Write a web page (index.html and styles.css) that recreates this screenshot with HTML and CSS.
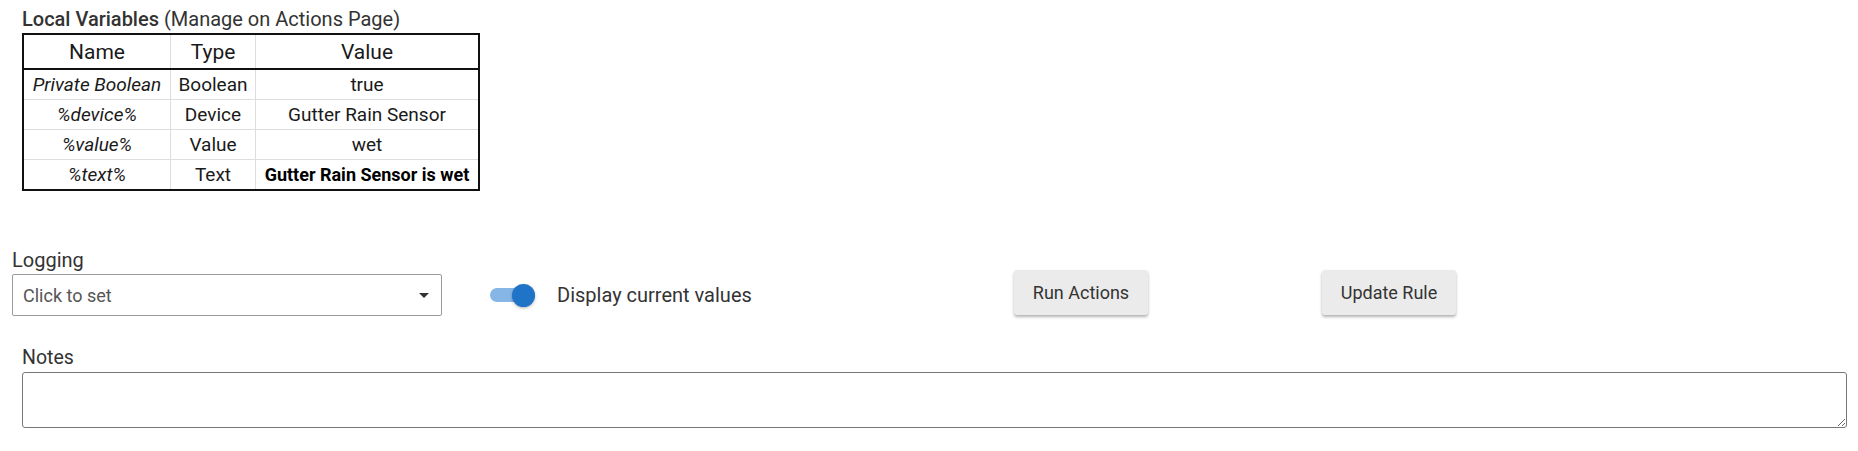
FILE: index.html
```html
<!DOCTYPE html>
<html>
<head>
<meta charset="utf-8">
<link rel="stylesheet" href="styles.css">
</head>
<body>
<section class="vars">
  <div class="vars-title"><b>Local Variables</b> (Manage on Actions Page)</div>
  <table class="vars-table">
    <thead>
      <tr><th class="c-name">Name</th><th class="c-type">Type</th><th class="c-value">Value</th></tr>
    </thead>
    <tbody>
      <tr><td class="n">Private Boolean</td><td>Boolean</td><td>true</td></tr>
      <tr><td class="n">%device%</td><td>Device</td><td>Gutter Rain Sensor</td></tr>
      <tr><td class="n">%value%</td><td>Value</td><td>wet</td></tr>
      <tr><td class="n">%text%</td><td>Text</td><td class="strong">Gutter Rain Sensor is wet</td></tr>
    </tbody>
  </table>
</section>

<section class="logging">
  <div class="field-label">Logging</div>
  <div class="controls">
    <div class="select">
      <span class="select-text">Click to set</span>
      <svg class="select-arrow" width="10" height="5" viewBox="0 0 10 5"><path d="M0 0 L10 0 L5 5 Z" fill="#333"/></svg>
    </div>
    <div class="switch-field">
      <span class="switch"><span class="switch-track"></span><span class="switch-thumb"></span></span>
      <span class="switch-label">Display current values</span>
    </div>
    <button class="btn">Run Actions</button>
    <button class="btn btn-second">Update Rule</button>
  </div>
</section>

<section class="notes">
  <div class="notes-label">Notes</div>
  <textarea class="notes-box"></textarea>
</section>
</body>
</html>
```

FILE: styles.css
```css
html, body {
  margin: 0;
  padding: 0;
  background: #fff;
}
body {
  font-family: Roboto, "Liberation Sans", sans-serif;
  color: #333;
}
.vars {
  padding: 7px 0 0 22px;
}
.vars-title {
  font-size: 20px;
  line-height: 24px;
  height: 26px;
  color: #333;
}
.vars-title b {
  font-weight: 500;
}
.vars-table {
  border-collapse: collapse;
  border: 2px solid #111;
  color: #1a1a1a;
  width: 458px;
}
.vars-table th {
  font-weight: 400;
  font-size: 21px;
  line-height: 24px;
  height: 33px;
  padding: 0;
  border-bottom: 2px solid #111;
  border-left: 1px solid #ddd;
}
.vars-table th:first-child, .vars-table td:first-child {
  border-left: none;
}
.c-name { width: 146px; }
.c-type { width: 84px; }
.vars-table td {
  font-size: 19px;
  line-height: 22px;
  height: 29px;
  padding: 0;
  text-align: center;
  border-top: 1px solid #ddd;
  border-left: 1px solid #ddd;
  white-space: nowrap;
}
.vars-table tbody tr:first-child td {
  border-top: none;
}
.vars-table td.n {
  font-style: italic;
}
.vars-table td.strong {
  font-weight: 700;
  font-size: 18px;
  color: #000;
}
.logging {
  padding: 58px 0 0 12px;
}
.field-label {
  font-size: 20px;
  line-height: 22px;
  color: #333;
  margin-bottom: 3px;
}
.controls {
  display: flex;
  align-items: center;
}
.select {
  box-sizing: border-box;
  width: 430px;
  height: 42px;
  border: 1px solid #9a9a9a;
  border-radius: 2px;
  display: flex;
  align-items: center;
  justify-content: space-between;
  padding: 0 12px 0 10px;
}
.select-text {
  font-size: 18px;
  color: #555;
}
.switch-field {
  flex: 0 0 524px;
  margin-left: 48px;
  display: flex;
  align-items: center;
}
.switch {
  position: relative;
  width: 45px;
  height: 23px;
  display: inline-block;
}
.switch-track {
  position: absolute;
  left: 0;
  top: 4px;
  width: 45px;
  height: 14px;
  border-radius: 7px;
  background: #86b6e6;
}
.switch-thumb {
  position: absolute;
  right: 0;
  top: 0;
  width: 23px;
  height: 23px;
  border-radius: 50%;
  background: #1f74c8;
  box-shadow: 0 1px 3px rgba(0,0,0,0.3);
}
.switch-label {
  margin-left: 22px;
  font-size: 20px;
  color: #333;
}
.btn {
  width: 134px;
  height: 45px;
  margin-top: -5px;
  border: none;
  border-radius: 3px;
  background: #ebebeb;
  color: #333;
  font-family: Roboto, "Liberation Sans", sans-serif;
  font-size: 18px;
  box-shadow: 0 2px 3px rgba(0,0,0,0.3);
  padding: 0;
}
.btn-second {
  margin-left: 174px;
}
.notes {
  padding: 31px 0 0 22px;
}
.notes-label {
  font-size: 19.5px;
  line-height: 22px;
  color: #333;
  margin-bottom: 3px;
}
.notes-box {
  display: block;
  box-sizing: border-box;
  width: 1825px;
  height: 56px;
  margin: 0;
  border: 1px solid #777;
  border-radius: 3px;
}
```
